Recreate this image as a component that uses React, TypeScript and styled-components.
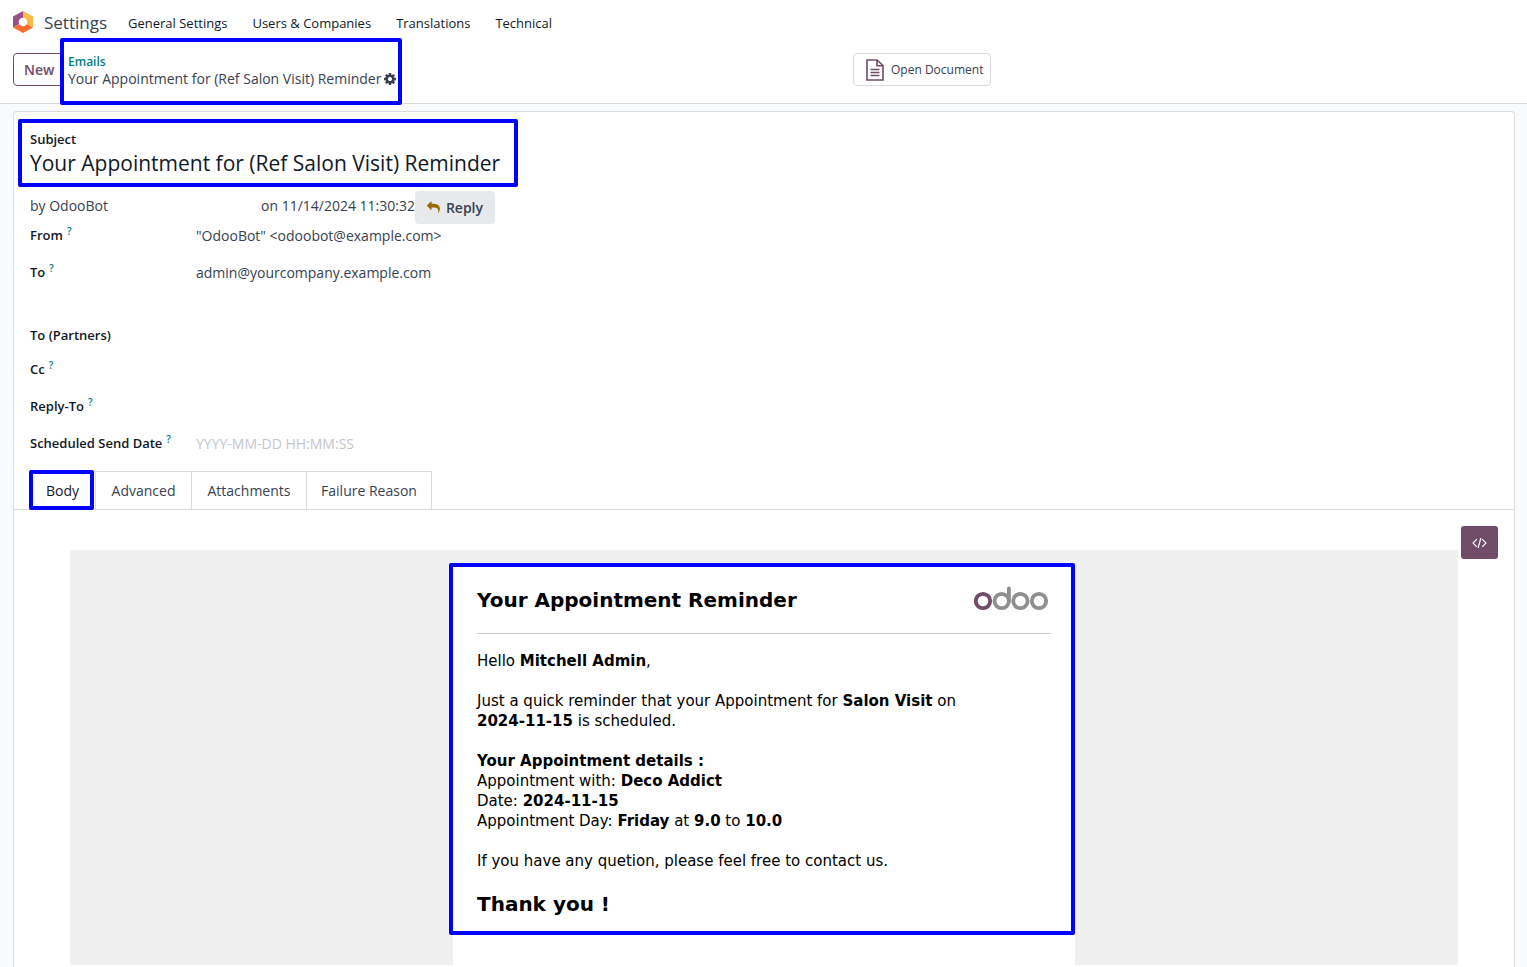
import React from "react";
import styled, { createGlobalStyle, css } from "styled-components";

const GlobalStyle = createGlobalStyle`
  *, *::before, *::after { box-sizing: border-box; }
  body {
    margin: 0;
    background: #ffffff;
    color: #374151;
    font-family: "Open Sans", "Noto Sans", sans-serif;
    font-size: 14px;
    line-height: 21px;
    overflow: hidden;
  }
  button, input { font: inherit; color: inherit; }
`;

const Page = styled.div`
  display: flex;
  flex-direction: column;
  min-height: 100vh;
  background: #f9fafb;
`;

const NavBar = styled.nav`
  display: flex;
  align-items: center;
  height: 46px;
  padding: 0 12px;
  background: #ffffff;
`;

const Brand = styled.a`
  display: flex;
  align-items: center;
  gap: 10px;
  width: 116px;
  padding-bottom: 2px;
  color: #374151;
  font-size: 17px;
  text-decoration: none;
`;

const Menu = styled.div`
  display: flex;
  gap: 25px;
`;

const MenuLink = styled.a`
  color: #111827;
  font-size: 13px;
  text-decoration: none;
`;

const ControlPanel = styled.header`
  display: grid;
  grid-template-columns: 1fr auto 1fr;
  height: 58px;
  padding: 7px 13px 0;
  border-bottom: 1px solid #d8dadd;
  background: #ffffff;
`;

const PanelStart = styled.div`
  display: flex;
  align-items: flex-start;
  gap: 4px;
  width: 840px;
`;

const PanelActions = styled.div`
  display: flex;
  align-items: flex-start;
`;

const NewButton = styled.button`
  width: 51px;
  height: 33px;
  padding: 0 10px;
  border: 1px solid #714b67;
  border-radius: 4px;
  background: #ffffff;
  color: #714b67;
  font-weight: 600;
  text-align: left;
`;

const StatButton = styled.button`
  display: flex;
  align-items: center;
  gap: 7px;
  width: 138px;
  height: 33px;
  padding: 0 0 0 11px;
  border: 1px solid #d8dadd;
  border-radius: 4px;
  background: #ffffff;
  font-size: 12px;
  white-space: nowrap;
`;

const frame = css`
  position: absolute;
  content: "";
  border: 4px solid #0000ff;
  border-radius: 2px;
  pointer-events: none;
`;

const Breadcrumb = styled.div`
  position: relative;
  display: flex;
  flex-direction: column;
  width: 328px;
  font-size: 14px;
  line-height: 17px;
  white-space: nowrap;

  &::after {
    ${frame}
    inset: -15px -6px -18px -8px;
  }
`;

const CrumbLink = styled.a`
  color: #017e84;
  font-size: 12px;
  font-weight: 600;
  text-decoration: none;
`;

const CrumbCurrent = styled.div`
  display: flex;
  align-items: center;
  justify-content: space-between;
`;

const IconButton = styled.button`
  display: flex;
  padding: 0;
  border: 0;
  background: none;
`;

const Sheet = styled.main`
  display: flex;
  flex: 1;
  flex-direction: column;
  margin: 7px 12px 0 13px;
  border: 1px solid #d8dadd;
  border-bottom: 0;
  border-radius: 4px 4px 0 0;
  background: #ffffff;
`;

const Form = styled.form`
  padding: 16px 16px 0;
`;

const Subject = styled.div`
  position: relative;
  width: 480px;
  height: 63px;

  &::after {
    ${frame}
    inset: -9px -8px 4px -12px;
  }
`;

const SubjectLabel = styled.label`
  display: block;
  color: #111827;
  font-size: 13px;
  font-weight: 600;
  line-height: 22px;
`;

const SubjectInput = styled.input`
  display: block;
  width: 100%;
  height: 26px;
  padding: 0;
  border: 0;
  background: none;
  color: #111827;
  font-size: 21px;
`;

const Meta = styled.div`
  display: flex;
  height: 33px;
  line-height: 30px;
  white-space: nowrap;
`;

const Author = styled.span`
  width: 231px;
`;

const Sent = styled.span`
  width: 154px;
`;

const ReplyButton = styled.button`
  display: flex;
  align-items: center;
  gap: 6px;
  width: 80px;
  height: 33px;
  padding: 0 12px;
  border: 0;
  border-radius: 4px;
  background: #e7e9ed;
  font-weight: 600;
`;

const Field = styled.div<{ $height: number }>`
  display: grid;
  grid-template-columns: 166px 1fr;
  align-items: start;
  height: ${(p) => p.$height}px;
`;

const FieldLabel = styled.label`
  color: #111827;
  font-size: 13px;
  font-weight: 600;
  line-height: 22px;
  white-space: nowrap;
`;

const Help = styled.sup`
  margin-left: 4px;
  color: #017e84;
  font-size: 10px;
  line-height: 0;
`;

const FieldInput = styled.input`
  width: 100%;
  max-width: 540px;
  height: 23px;
  padding: 0;
  border: 0;
  background: none;

  &::placeholder { color: #c3c6cc; opacity: 1; }
`;

const Tabs = styled.div`
  display: flex;
  height: 39px;
  padding-left: 16px;
  border-bottom: 1px solid #d8dadd;
`;

const Tab = styled.button<{ $width: number; $active?: boolean }>`
  position: relative;
  width: ${(p) => p.$width}px;
  padding: 0;
  border: 0;
  border-top: 1px solid #d8dadd;
  border-right: 1px solid #d8dadd;
  background: #ffffff;
  white-space: nowrap;

  ${(p) =>
    p.$active &&
    css`
      color: #111827;
      &::after {
        ${frame}
        inset: -2px 1px -1px -1px;
      }
    `}
`;

const BodyPane = styled.section`
  display: grid;
  grid-template-columns: 1fr 53px;
  flex: 1;
  padding: 16px 3px 2px 56px;
`;

const CodeButton = styled.button`
  display: flex;
  align-items: center;
  justify-content: center;
  width: 37px;
  height: 33px;
  margin-left: 3px;
  padding: 0;
  border: 0;
  border-radius: 3px;
  background: #714b67;
  color: #ffffff;
`;

const Canvas = styled.div`
  display: flex;
  justify-content: center;
  margin-top: 24px;
  padding-top: 16px;
  background: #f0f0f0;
`;

const Mail = styled.article`
  position: relative;
  width: 622px;
  padding: 16px 24px 48px;
  background: #ffffff;
  color: #000000;
  font-family: "DejaVu Sans", Verdana, sans-serif;
  font-size: 15px;
  line-height: 20px;

  &::after {
    ${frame}
    inset: -3px 0 30px -4px;
  }
`;

const MailHeader = styled.div`
  display: flex;
  align-items: center;
  justify-content: space-between;
  height: 52px;
  margin-bottom: 17px;
  padding-bottom: 16px;
  border-bottom: 1px solid #cccccc;
`;

const MailTitle = styled.h1`
  margin: 0;
  font-size: 20px;
  line-height: 24px;
`;

const Paragraph = styled.p`
  margin: 0 0 20px;
`;

const Thanks = styled.h2`
  margin: 0;
  font-size: 20px;
  line-height: 26px;
`;

const AppLogo = () => (
  <svg width="22" height="24" viewBox="0 0 22 24" aria-hidden="true">
    <path d="M11 1 1 6.500v11L11 12z" fill="#985184" />
    <path d="M11 1 21 6.500v11L11 12z" fill="#fbb945" />
    <path d="M1 17.500 11 12l10 5.500L11 23z" fill="#fc6b2d" />
    <circle cx="11" cy="12" r="4.300" fill="#ffffff" />
  </svg>
);

const GearIcon = () => (
  <svg width="12" height="12" viewBox="0 128 1536 1536" fill="#374151" aria-hidden="true">
    <path d="M1024 896q0-106-75-181t-181-75-181 75-75 181 75 181 181 75 181-75 75-181zm512-109v222q0 12-8 23t-20 13l-185 28q-19 54-39 91 35 50 107 138 10 12 10 25t-9 23q-27 37-99 108t-94 71q-12 0-26-9l-138-108q-44 23-91 38-16 136-29 186-7 28-36 28h-222q-14 0-24.500-8.500t-11.500-21.500l-28-184q-49-16-90-37l-141 107q-10 9-25 9-14 0-25-11-126-114-165-168-7-10-7-23 0-12 8-23 15-21 51-66.500t54-70.500q-27-50-41-99l-183-27q-13-2-21-12.500t-8-23.500v-222q0-12 8-23t19-13l186-28q14-46 39-92-40-57-107-138-10-12-10-24 0-10 9-23 26-36 98.500-107.500t94.500-71.500q13 0 26 10l138 107q44-23 91-38 16-136 29-186 7-28 36-28h222q14 0 24.500 8.500t11.500 21.500l28 184q49 16 90 37l142-107q9-9 24-9 13 0 25 10 129 119 165 170 7 8 7 22 0 12-8 23-15 21-51 66.500t-54 70.500q26 50 41 98l183 28q13 2 21 12.500t8 23.500z" />
  </svg>
);

const ReplyIcon = () => (
  <svg width="15" height="15" viewBox="0 0 1792 1792" fill="#9a6b01" aria-hidden="true">
    <path d="M1792 1120q0 166-127 451-3 7-10.500 24t-13.500 30-13 22q-12 17-28 17-15 0-23.500-10t-8.500-25q0-9 2.500-26.500t2.500-23.500q5-68 5-123 0-101-17.500-181t-48.500-138.500-80-101-105.500-69.500-133-42.500-154-21.500-175.500-6h-224v256q0 26-19 45t-45 19-45-19l-512-512q-19-19-19-45t19-45l512-512q19-19 45-19t45 19 19 45v256h224q713 0 875 403 53 134 53 333z" />
  </svg>
);

const DocumentIcon = () => (
  <svg width="19" height="22" viewBox="0 0 19 22" fill="none" stroke="#714b67" strokeWidth="1.600" aria-hidden="true">
    <path d="M2 1h10L18 6.500V21H2zM12 1v5.700h6M5.500 10.500h9M5.500 13.500h9M5.500 16.500h9" />
  </svg>
);

const CodeIcon = () => (
  <svg width="15" height="12" viewBox="0 0 15 12" fill="none" stroke="#ffffff" strokeWidth="1.200" aria-hidden="true">
    <path d="M4.800 2.200 1 6l3.800 3.800M10.200 2.200 14 6l-3.800 3.800M8.900 1 6.100 11" />
  </svg>
);

const OdooLogo = () => (
  <svg width="77" height="30" viewBox="0 0 77 30" fill="none" stroke="#8f8f8f" strokeWidth="3.800" role="img" aria-label="Odoo">
    <circle cx="9" cy="16" r="7.200" stroke="#714b67" />
    <circle cx="27.700" cy="16" r="7.200" />
    <path d="M34.900 16V3.500" strokeLinecap="round" />
    <circle cx="46.400" cy="16" r="7.200" />
    <circle cx="65" cy="16" r="7.200" />
  </svg>
);

const menu = ["General Settings", "Users & Companies", "Translations", "Technical"];

const fields = [
  { id: "from", label: "From", help: true, value: '"OdooBot" <odoobot@example.com>', height: 37 },
  { id: "to", label: "To", help: true, value: "admin@yourcompany.example.com", height: 63 },
  { id: "partners", label: "To (Partners)", help: false, value: "", height: 34 },
  { id: "cc", label: "Cc", help: true, value: "", height: 37 },
  { id: "reply-to", label: "Reply-To", help: true, value: "", height: 37 },
  { id: "scheduled", label: "Scheduled Send Date", help: true, value: "", placeholder: "YYYY-MM-DD HH:MM:SS", height: 39 },
];

const tabs = [
  { label: "Body", width: 66, active: true },
  { label: "Advanced", width: 96 },
  { label: "Attachments", width: 115 },
  { label: "Failure Reason", width: 125 },
];

export default function App() {
  return (
    <Page>
      <GlobalStyle />
      <NavBar>
        <Brand href="#">
          <AppLogo />
          Settings
        </Brand>
        <Menu>
          {menu.map((item) => (
            <MenuLink href="#" key={item}>{item}</MenuLink>
          ))}
        </Menu>
      </NavBar>

      <ControlPanel>
        <PanelStart>
          <NewButton type="button">New</NewButton>
          <Breadcrumb>
            <CrumbLink href="#">Emails</CrumbLink>
            <CrumbCurrent>
              Your Appointment for (Ref Salon Visit) Reminder
              <IconButton type="button" aria-label="Actions"><GearIcon /></IconButton>
            </CrumbCurrent>
          </Breadcrumb>
        </PanelStart>
        <PanelActions>
          <StatButton type="button">
            <DocumentIcon />
            Open Document
          </StatButton>
        </PanelActions>
      </ControlPanel>

      <Sheet>
        <Form>
          <Subject>
            <SubjectLabel htmlFor="subject">Subject</SubjectLabel>
            <SubjectInput id="subject" defaultValue="Your Appointment for (Ref Salon Visit) Reminder" />
          </Subject>
          <Meta>
            <Author>by OdooBot</Author>
            <Sent>on 11/14/2024 11:30:32</Sent>
            <ReplyButton type="button"><ReplyIcon />Reply</ReplyButton>
          </Meta>
          {fields.map((f) => (
            <Field key={f.id} $height={f.height}>
              <FieldLabel htmlFor={f.id}>
                {f.label}
                {f.help && <Help>?</Help>}
              </FieldLabel>
              <FieldInput id={f.id} defaultValue={f.value} placeholder={f.placeholder} />
            </Field>
          ))}
        </Form>

        <Tabs role="tablist">
          {tabs.map((t) => (
            <Tab key={t.label} type="button" role="tab" aria-selected={!!t.active} $width={t.width} $active={t.active}>
              {t.label}
            </Tab>
          ))}
        </Tabs>

        <BodyPane>
          <Canvas>
            <Mail>
              <MailHeader>
                <MailTitle>Your Appointment Reminder</MailTitle>
                <OdooLogo />
              </MailHeader>
              <Paragraph>Hello <b>Mitchell Admin</b>,</Paragraph>
              <Paragraph>
                Just a quick reminder that your Appointment for <b>Salon Visit</b> on
                <br />
                <b>2024-11-15</b> is scheduled.
              </Paragraph>
              <Paragraph>
                <b>Your Appointment details :</b>
                <br />
                Appointment with: <b>Deco Addict</b>
                <br />
                Date: <b>2024-11-15</b>
                <br />
                Appointment Day: <b>Friday</b> at <b>9.0</b> to <b>10.0</b>
              </Paragraph>
              <Paragraph>If you have any quetion, please feel free to contact us.</Paragraph>
              <Thanks>Thank you !</Thanks>
            </Mail>
          </Canvas>
          <CodeButton type="button" aria-label="Code view"><CodeIcon /></CodeButton>
        </BodyPane>
      </Sheet>
    </Page>
  );
}
